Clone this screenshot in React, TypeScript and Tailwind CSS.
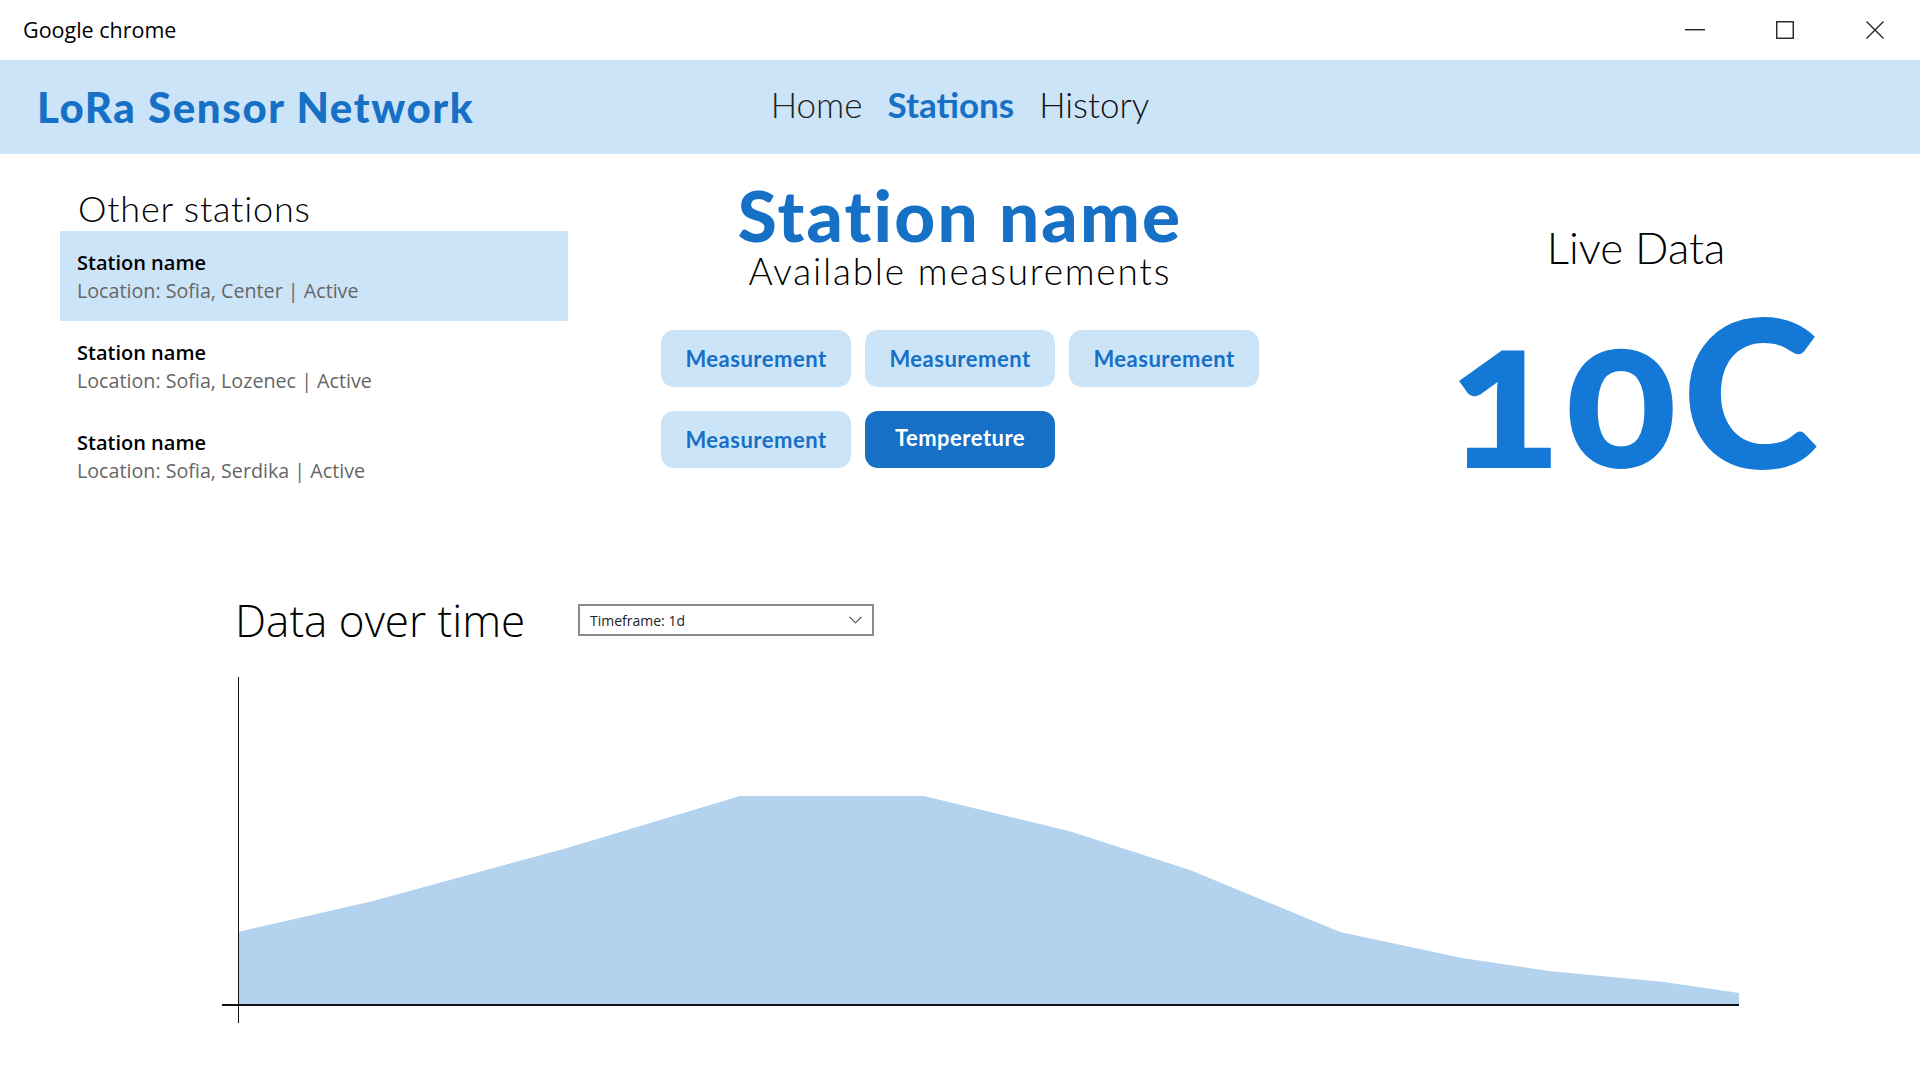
import React from "react";

const HEAD = "font-['Lato',sans-serif]";
const UI = "font-['Open_Sans',sans-serif]";

const stations = [
  { name: "Station name", loc: "Location: Sofia, Center | Active", active: true },
  { name: "Station name", loc: "Location: Sofia, Lozenec | Active", active: false },
  { name: "Station name", loc: "Location: Sofia, Serdika | Active", active: false },
];

const chartPts: [number, number][] = [
  [238, 931],
  [373, 900],
  [567, 847],
  [740, 795],
  [924, 795],
  [1069, 830],
  [1190, 869],
  [1340, 931],
  [1462, 957],
  [1549, 970],
  [1664, 981],
  [1739, 992],
];

function TitleBar() {
  return (
    <div className="h-[60px] flex items-center justify-between bg-white">
      <div className={`${UI} pl-[23px] text-[21.5px] text-black`}>Google chrome</div>
      <div className="flex items-center h-full">
        <div className="w-[90px] h-full flex items-center justify-center">
          <svg width="20" height="2" viewBox="0 0 20 2">
            <rect x="0" y="0" width="20" height="1.4" fill="#222" />
          </svg>
        </div>
        <div className="w-[90px] h-full flex items-center justify-center">
          <svg width="18" height="18" viewBox="0 0 18 18">
            <rect x="0.75" y="0.75" width="16.5" height="16.5" fill="none" stroke="#222" strokeWidth="1.4" />
          </svg>
        </div>
        <div className="w-[90px] h-full flex items-center justify-center">
          <svg width="18" height="18" viewBox="0 0 18 18">
            <path d="M0.5 0.5 L17.5 17.5 M17.5 0.5 L0.5 17.5" stroke="#222" strokeWidth="1.3" />
          </svg>
        </div>
      </div>
    </div>
  );
}

function NavBar() {
  return (
    <div className="h-[94px] bg-[#cce4f7] grid grid-cols-[1fr_auto_1fr] items-center">
      <div className={`${HEAD} pl-[37px] text-[42px] font-black text-[#1570c6] leading-none tracking-[1.6px]`}>
        LoRa Sensor Network
      </div>
      <div className={`${HEAD} flex items-center gap-[25px] text-[35px] leading-none -mt-[6px]`}>
        <span className="font-light text-[#222]">Home</span>
        <span className="font-bold text-[#1570c6]">Stations</span>
        <span className="font-light text-[#111]">History</span>
      </div>
      <div />
    </div>
  );
}

function LeftPanel() {
  return (
    <div className="w-[568px] pl-[60px] pt-[34px]">
      <div className={`${HEAD} text-[36px] font-light leading-[40px] tracking-[0.8px] text-black pl-[18px] mb-[3px]`}>
        Other stations
      </div>
      <div className="flex flex-col">
        {stations.map((s, i) => (
          <div
            key={i}
            className={`h-[90px] pt-[18px] pl-[17px] ${s.active ? "bg-[#cce4f7]" : ""} ${UI}`}
          >
            <div className="text-[20px] leading-[28px] font-semibold text-black">{s.name}</div>
            <div className="text-[19.7px] leading-[28px] text-[#666]">{s.loc}</div>
          </div>
        ))}
      </div>
    </div>
  );
}

function CenterPanel() {
  const btn =
    "w-[190px] h-[57px] rounded-[13px] flex items-center justify-center text-[22px] font-bold tracking-[0.5px]";
  return (
    <div className="w-[784px] flex flex-col items-center pt-[25px]">
      <div className={`${HEAD} text-[71px] font-black leading-none tracking-[2.2px] text-[#1570c6]`}>
        Station name
      </div>
      <div className={`${HEAD} text-[37px] font-light leading-none tracking-[1.8px] text-black mt-[2px]`}>
        Available measurements
      </div>
      <div className={`${HEAD} mt-[41px] grid grid-cols-[190px_190px_190px] gap-x-[14px] gap-y-[24px]`}>
        <div className={`${btn} bg-[#cce4f7] text-[#1570c6]`}>Measurement</div>
        <div className={`${btn} bg-[#cce4f7] text-[#1570c6]`}>Measurement</div>
        <div className={`${btn} bg-[#cce4f7] text-[#1570c6]`}>Measurement</div>
        <div className={`${btn} bg-[#cce4f7] text-[#1570c6]`}>Measurement</div>
        <div className={`${btn} bg-[#1570c6] text-white pb-[5px]`}>Tempereture</div>
      </div>
    </div>
  );
}

function RightPanel() {
  return (
    <div className="flex-1 flex flex-col items-center pt-[71px]">
      <div className={`${HEAD} text-[44px] font-light leading-none text-black`}>Live Data</div>
      <div
        className={`${HEAD} text-[207px] font-black leading-[170px] tracking-[5px] text-[#1479d6] mt-[34px] oldstyle-nums`}
      >
        10C
      </div>
    </div>
  );
}

function Chart() {
  const poly =
    chartPts.map((p) => `${p[0]},${p[1]}`).join(" ") + " 1739,1004 238,1004";
  return (
    <svg width="1560" height="370" viewBox="200 660 1560 370" className="block">
      <polygon points={poly} fill="#b3d2ed" />
      <line x1="238.5" y1="676" x2="238.5" y2="1022" stroke="#111" strokeWidth="1" />
      <line x1="222" y1="1004" x2="1739" y2="1004" stroke="#111" strokeWidth="2" />
    </svg>
  );
}

function DataSection() {
  return (
    <div className="flex flex-col">
      <div className="flex items-center pl-[235px] h-[60px]">
        <div className={`${UI} text-[44px] font-light leading-none text-black w-[343px]`}>Data over time</div>
        <div className="w-[296px] h-[32px] border-2 border-[#8a8a8a] flex items-center justify-between pl-[10px] pr-[10px]">
          <span className={`${UI} text-[14px] text-[#222]`}>Timeframe: 1d</span>
          <svg width="13" height="8" viewBox="0 0 13 8">
            <path d="M0.5 0.8 L6.5 6.8 L12.5 0.8" fill="none" stroke="#444" strokeWidth="1.1" />
          </svg>
        </div>
      </div>
      <div className="pl-[200px] mt-[11px]">
        <Chart />
      </div>
    </div>
  );
}

export default function App() {
  return (
    <div className="w-[1920px] h-[1080px] bg-white overflow-hidden">
      <TitleBar />
      <NavBar />
      <div className="flex h-[436px]">
        <LeftPanel />
        <CenterPanel />
        <RightPanel />
      </div>
      <DataSection />
    </div>
  );
}
